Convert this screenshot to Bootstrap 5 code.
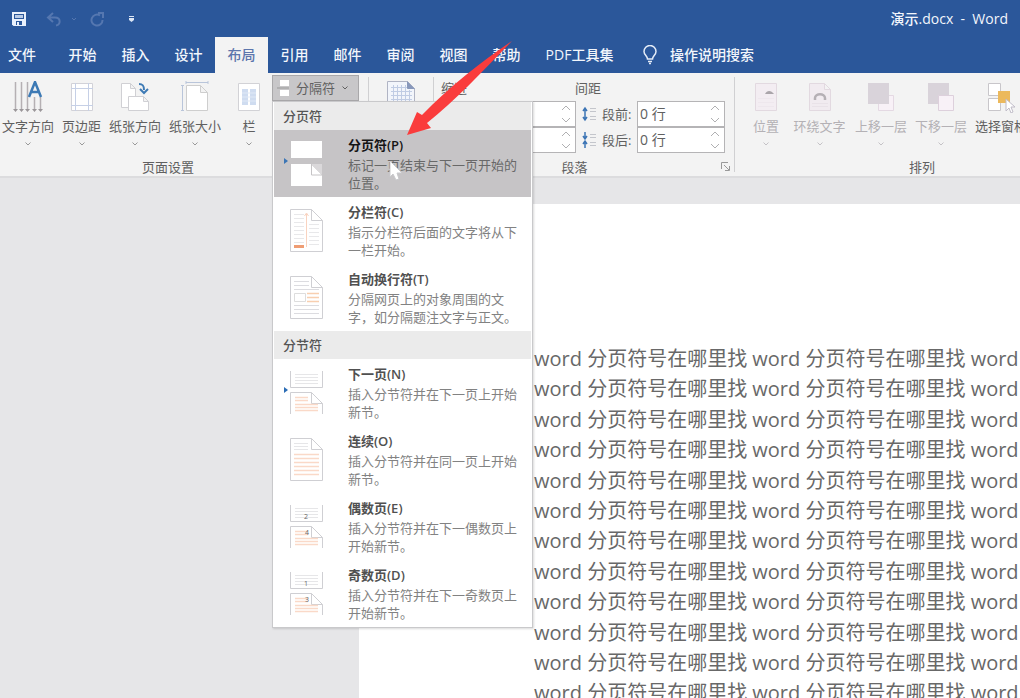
<!DOCTYPE html>
<html lang="zh-CN">
<head>
<meta charset="utf-8">
<meta name="viewport" content="width=device-width, initial-scale=1">
<title>演示.docx - Word</title>
<link href="https://cdn.jsdelivr.net/npm/bootstrap@5.3.0/dist/css/bootstrap.min.css" rel="stylesheet">
<style>
  body { font-family: "Open Sans", "Noto Sans CJK SC", sans-serif; font-size: 13px; line-height: 18px; color: #606060; background: #e6e6e8; }
  button, input { font: inherit; color: inherit; }
  svg { display: block; flex: none; }
  .topbar { background: #2b579a; color: #f2f6fc; }
  .title-row { height: 37px; padding: 0 12px; }
  .qat { border: 0; background: none; padding: 0; }
  .doc-title { font-size: 14px; font-weight: 500; white-space: pre; }
  .tab-row { height: 36px; flex-wrap: nowrap; white-space: nowrap; }
  .tab-row .nav-link { width: 53px; height: 35px; padding: 0; line-height: 35px; text-align: center; color: #f2f6fc; font-size: 14px; font-weight: 500; border-radius: 0; }
  .tab-row .nav-link.file-tab { width: 44px; margin-right: 12px; }
  .tab-row .nav-link.active { background: #f3f3f3; color: #5d76ad; height: 36px; }
  .tab-row .nav-link.wide { width: 93px; }
  .tab-row .nav-link.tell { width: auto; gap: 13px; margin-left: 17px; }
  .ribbon { background: #f3f3f3; border-bottom: 2px solid #dcdcde; height: 105px; white-space: nowrap; }
  .group { padding-top: 2px; position: relative; }
  .group + .group::before { content: ""; position: absolute; left: 0; top: 4px; bottom: 4px; width: 1px; background: #d0d0d2; }
  .g-body { height: 83px; }
  .g-label { text-align: center; }
  .setup { width: 368px; } .setup .g-label { padding-right: 32px; }
  .manu { width: 65px; } .para { width: 301px; } .para .g-label { padding-right: 18px; }
  .arrange { flex: 1 1 0; min-width: 0; overflow: hidden; }
  .arrange > div { width: 376px; }
  .tool { border: 0; background: none; padding: 6px 0 0; display: flex; flex-direction: column; align-items: center; width: 60px; }
  .tool .txt { margin-top: 4px; }
  .tool .chev { margin-top: 7px; color: #999; }
  .tool:disabled { color: #b4b1b5; }
  .tool:disabled .chev { color: #c4c2c6; }
  .tool.w-sm { width: 44px; } .tool.w-md { width: 51px; } .tool.w-lg { width: 56px; } .tool.w-xl { width: 64px; }
  .break-wrap { margin: 0 9px 0 auto; }
  .break-btn { width: 87px; height: 26px; border: 1px solid #a9a8aa; background: #c8c7c9; padding: 0 4px; gap: 7px; border-radius: 0; }
  .break-menu { top: 26px; left: 0; width: 261px; padding: 0 1px; border: 1px solid #c9c9cb; border-radius: 0; color: #606060; font-size: 13px; box-shadow: 1px 1px 2px rgba(0,0,0,.15); z-index: 10; }
  .break-menu .sect { height: 28px; line-height: 28px; padding: 0 9px; margin: 0; background: #ebebeb; font-size: 13px; font-weight: 500; color: #555; }
  .break-menu .dropdown-item { height: 67px; display: flex; gap: 15px; padding: 0 6px 0 9px; color: #828282; white-space: normal; }
  .break-menu .dropdown-item.active { background: #c6c4c6; color: #686868; }
  .break-menu .words { padding-top: 6px; }
  .break-menu strong { display: block; color: #505050; font-weight: 600; margin-bottom: 2px; }
  .break-menu .active strong { color: #151515; }
  .field { height: 26px; width: 88px; background: #fff; border: 1px solid #b5b4b6; }
  .field.indent-field { width: 66px; }
  .field input { border: 0; background: none; outline: 0; padding: 0 2px; width: 100%; min-width: 0; font-size: 14px; }
  .spacing { margin: 0 9px 0 5px; }
  .spacing svg:first-child { margin-right: 5px; }
  .spacing label { width: 35px; }
  .gap-title { margin-left: 108px; }
  .launch { border: 0; background: none; padding: 0; position: absolute; right: 4px; bottom: 5px; }
  .sheet { margin: 26px 0 0 359px; padding: 140px 0 0 175px; background: #fff; overflow: hidden; white-space: nowrap; }
  .sheet p { font-size: 20px; line-height: 1.52; color: #686868; margin: 0; }
  .pointer { position: absolute; left: 389px; top: 160px; z-index: 20; }
  .callout { position: absolute; left: 400px; top: 36px; z-index: 20; pointer-events: none; }
</style>
</head>
<body class="vh-100 d-flex flex-column overflow-hidden position-relative">
<svg width="0" height="0" class="position-absolute" aria-hidden="true">
  <defs>
    <symbol id="chev" viewBox="0 0 6 4"><path d="M.5.5 3 3 5.500.5" fill="none" stroke="currentColor"/></symbol>
    <symbol id="spin" viewBox="0 0 10 22"><path d="M1 7 5 3 9 7M1 15l4 4 4-4" fill="none" stroke="#b0b0b2"/></symbol>
    <symbol id="page" viewBox="0 0 50 67"><path d="M7.500 12.500h21l11 11v31h-32zM28.500 12.500v11h11" fill="#fff" stroke="#cfcfd3"/></symbol>
    <symbol id="split" viewBox="0 0 50 67"><path d="M7.500 12v16.500h32V12M7.500 55V33.500h21l11 11V55M28.500 33.500v11h11" fill="none" stroke="#cfcfd3"/><path d="M12 15.500h23M12 18.500h23M12 21.500h23M12 24.500h23" stroke="#e6e6e8"/><path d="M12 38.500h13M12 41.500h13M12 45.500h23M12 48.500h23M12 51.500h23" stroke="#fad9c8" stroke-width="1.500"/></symbol>
  </defs>
</svg>

<header class="topbar">
  <div class="title-row d-flex align-items-center">
    <button class="qat" aria-label="保存"><svg width="14" height="14" viewBox="0 0 14 14"><path d="M0 0h14v14H1.500L0 12.500z" fill="#e9f0fb"/><path d="M2 2h10v5H2zM4 9h6v4H4z" fill="#2b579a"/><path d="M3 3h8v3H3z" fill="#b9cbe6"/><path d="M5 10h2v3H5z" fill="#e9f0fb"/></svg></button>
    <button class="qat ms-3 ps-1" aria-label="撤消"><svg width="44" height="16" viewBox="0 0 44 16" fill="none" stroke="#5577b0" stroke-width="2"><path d="M7 2 2 6.500 7 11M3 6.500h6c6 0 6 7 1 8"/><path d="m26 7 2 2 2-2" stroke-width="1"/></svg></button>
    <button class="qat" aria-label="重复"><svg width="14" height="16" viewBox="0 0 14 16" fill="none" stroke="#5577b0" stroke-width="2"><path d="M12.500 9A5.500 5.500 0 1 1 10 4.500M8 2h5v5"/></svg></button>
    <button class="qat ms-4" aria-label="自定义快速访问工具栏"><svg width="7" height="8" viewBox="0 0 7 8" fill="#dce6f5"><path d="M1 1h5v1H1zM1 3h5v2L3.500 7 1 5z"/></svg></button>
    <span class="doc-title ms-auto">演示.docx  -  Word</span>
  </div>
  <nav class="nav tab-row">
    <a class="nav-link file-tab" href="#">文件</a><a class="nav-link" href="#">开始</a><a class="nav-link" href="#">插入</a><a class="nav-link" href="#">设计</a><a class="nav-link active" href="#">布局</a><a class="nav-link" href="#">引用</a><a class="nav-link" href="#">邮件</a><a class="nav-link" href="#">审阅</a><a class="nav-link" href="#">视图</a><a class="nav-link" href="#">帮助</a><a class="nav-link wide" href="#">PDF工具集</a>
    <a class="nav-link tell d-flex align-items-center" href="#"><svg width="14" height="20" viewBox="0 0 14 20" fill="none" stroke="#e4ecf8" stroke-width="1.500"><path d="M4.500 14C4.500 11 1 10 1 6.500a6 6 0 0 1 12 0C13 10 9.500 11 9.500 14zM5 16.500h4M6 18.500h2"/></svg>操作说明搜索</a>
  </nav>
</header>

<section class="ribbon d-flex" aria-label="布局">
  <div class="group setup">
    <div class="g-body d-flex">
      <button class="tool w-lg"><svg width="30" height="32" viewBox="0 0 30 32"><path d="M2.500 1v27M8.500 1v27M14.500 1v27M21.500 16v12M27.500 16v12" stroke="#b5b0b3" stroke-width="1.500"/><path d="m0 28 2.500 3L5 28zM6 28l2.500 3 2.500-3zM12 28l2.500 3 2.500-3zM19 28l2.500 3 2.500-3zM25 28l2.500 3 2.500-3z" fill="#9b979a"/><path d="m16 16 6-15 6 15M18 11h8" fill="none" stroke="#3d7ab5" stroke-width="2.500"/></svg><span class="txt">文字方向</span><svg class="chev" width="6" height="4"><use href="#chev"/></svg></button>
      <button class="tool w-md"><svg width="22" height="32" viewBox="0 0 22 32"><path d="M.5 2.500h21v27H.5z" fill="#fff" stroke="#d2d2d8"/><path d="M4.500 2v28M17.500 2v28M0 7.500h22M0 24.500h22" stroke="#c6d0e6"/></svg><span class="txt">页边距</span><svg class="chev" width="6" height="4"><use href="#chev"/></svg></button>
      <button class="tool w-lg"><svg width="30" height="32" viewBox="0 0 30 32"><path d="M1.500 2.500h9l5 5v19h-14zM10.500 2.500v5h5" fill="#fff" stroke="#d0d0d4"/><path d="M8.500 15.500h15l5 5v9h-20zM23.500 15.500v5h5" fill="#fff" stroke="#d0d0d4"/><path d="M19 3c4 0 5 2 5 6m-4-1 4 4 4-4" fill="none" stroke="#3d7ab5" stroke-width="2"/></svg><span class="txt">纸张方向</span><svg class="chev" width="6" height="4"><use href="#chev"/></svg></button>
      <button class="tool w-xl"><svg width="28" height="32" viewBox="0 0 28 32"><path d="M5.500 4.500h14l7 7v18h-21zM19.500 4.500v7h7" fill="#fff" stroke="#cecece"/><path d="M5 1.500h22M1.500 4v26M5 0v3M27 0v3M0 4.500h3M0 29.500h3" stroke="#b9c5da"/></svg><span class="txt">纸张大小</span><svg class="chev" width="6" height="4"><use href="#chev"/></svg></button>
      <button class="tool w-sm"><svg width="22" height="32" viewBox="0 0 22 32"><path d="M.5 2.500h21v27H.5z" fill="#fff" stroke="#d2d2d6"/><path d="M4 8h6v16H4zM12 8h6v16h-6z" fill="#cfdcf0"/><path d="M4 12h14M4 16h14M4 20h14" stroke="#e0e9f6"/></svg><span class="txt">栏</span><svg class="chev" width="6" height="4"><use href="#chev"/></svg></button>
      <div class="break-wrap position-relative">
        <button class="break-btn d-flex align-items-center" aria-expanded="true"><svg width="12" height="16" viewBox="0 0 12 16"><path d="M3 0h9v6H3zM3 10h9v6H3z" fill="#fff"/><path d="M0 8h12" stroke="#999"/></svg>分隔符<svg width="6" height="4"><use href="#chev"/></svg></button>
        <div class="dropdown-menu break-menu show">
          <h6 class="sect">分页符</h6>
          <button class="dropdown-item active"><svg width="50" height="67" viewBox="0 0 50 67"><path d="M8 11h31v17H8zM8 34h20l11 11v11H8z" fill="#fff"/><path d="M28 34h11v11z" fill="#dad8da"/><path d="M28.500 34v11H39" fill="none" stroke="#c6c4c6"/><path d="m1 28 4 3-4 3z" fill="#3b75b5"/></svg><span class="words"><strong>分页符(P)</strong>标记一页结束与下一页开始的位置。</span></button>
          <button class="dropdown-item"><svg width="50" height="67" viewBox="0 0 50 67"><use href="#page"/><path d="M11 17.500h10M11 21.500h10M11 25.500h10M11 29.500h10M11 33.500h10M11 37.500h10M11 41.500h10M11 45.500h10M26 27.500h10M26 31.500h10M26 35.500h10M26 39.500h10M26 43.500h10M26 47.500h10" stroke="#e8e8ea"/><path d="M23.500 50V17m-2 2 2-3 2 3" fill="none" stroke="#f9d3c0"/><path d="M11 48h10v3H11z" fill="#ef9d74"/></svg><span class="words"><strong>分栏符(C)</strong>指示分栏符后面的文字将从下一栏开始。</span></button>
          <button class="dropdown-item"><svg width="50" height="67" viewBox="0 0 50 67"><use href="#page"/><path d="M11 17.500h15M11 21.500h15M11 25.500h25M11 41.500h25M11 45.500h25M11 49.500h25" stroke="#dcdce0"/><path d="M11.500 29.500h11v8h-11z" fill="#fff" stroke="#ddd"/><path d="M24 29.500h12M24 33.500h12M24 37.500h12" stroke="#f8cfb0" stroke-width="1.500"/></svg><span class="words"><strong>自动换行符(T)</strong>分隔网页上的对象周围的文字，如分隔题注文字与正文。</span></button>
          <h6 class="sect">分节符</h6>
          <button class="dropdown-item"><svg width="50" height="67" viewBox="0 0 50 67"><use href="#split"/><path d="m1 28 4 3-4 3z" fill="#2b6cb5"/></svg><span class="words"><strong>下一页(N)</strong>插入分节符并在下一页上开始新节。</span></button>
          <button class="dropdown-item"><svg width="50" height="67" viewBox="0 0 50 67"><use href="#page"/><path d="M11 17.500h14M11 20.500h14M11 23.500h14" stroke="#e6e6e8"/><path d="M11 28.500h25M11 32.500h25M11 36.500h25M11 40.500h25M11 44.500h25M11 48.500h25" stroke="#fad9c8" stroke-width="1.500"/></svg><span class="words"><strong>连续(O)</strong>插入分节符并在同一页上开始新节。</span></button>
          <button class="dropdown-item"><svg width="50" height="67" viewBox="0 0 50 67"><use href="#split"/><text x="21" y="26" font-size="7" fill="#666">2</text><text x="22" y="42" font-size="7" fill="#666">4</text></svg><span class="words"><strong>偶数页(E)</strong>插入分节符并在下一偶数页上开始新节。</span></button>
          <button class="dropdown-item"><svg width="50" height="67" viewBox="0 0 50 67"><use href="#split"/><text x="21" y="26" font-size="7" fill="#666">1</text><text x="22" y="42" font-size="7" fill="#666">3</text></svg><span class="words"><strong>奇数页(D)</strong>插入分节符并在下一奇数页上开始新节。</span></button>
        </div>
      </div>
    </div>
    <div class="g-label">页面设置</div>
  </div>

  <div class="group manu">
    <button class="tool w-100" aria-label="稿纸设置"><svg width="28" height="32" viewBox="0 0 28 32"><path d="M.5.500h20l7 7v24H.5z" fill="#f2f5fb" stroke="#b0b4c4"/><path d="M20.500.500v7h7" fill="#8898bb" stroke="#8898bb"/><path d="M4 6.500h16M4 10.500h21M4 14.500h21M4 18.500h21M4 22.500h21M6.500 4v22M10.500 4v22M14.500 4v22M18.500 4v22M22.500 9v17" stroke="#c0cce4"/></svg></button>
  </div>

  <div class="group para">
    <div class="g-body ps-2">
      <div class="d-flex pt-1"><span>缩进</span><span class="gap-title">间距</span></div>
      <div class="d-flex mt-1">
        <div class="flex-grow-1 d-flex flex-column align-items-end">
          <div class="field indent-field d-flex align-items-center pe-1"><input aria-label="左缩进"><svg width="10" height="22"><use href="#spin"/></svg></div>
          <div class="field indent-field d-flex align-items-center pe-1"><input aria-label="右缩进"><svg width="10" height="22"><use href="#spin"/></svg></div>
        </div>
        <div class="spacing">
          <div class="d-flex align-items-center">
            <svg width="16" height="16" viewBox="0 0 16 16"><path d="M4 3v10M2 5l2-3 2 3M2 11l2 3 2-3" fill="none" stroke="#3d75b5" stroke-width="1.500"/><path d="M9 2.500h6M9 5.500h6M9 10.500h6M9 13.500h6" stroke="#c4c6cc"/></svg>
            <label for="before">段前:</label>
            <div class="field d-flex align-items-center pe-1"><input id="before" value="0 行"><svg width="10" height="22"><use href="#spin"/></svg></div>
          </div>
          <div class="d-flex align-items-center">
            <svg width="16" height="16" viewBox="0 0 16 16"><path d="M4 0v6M2 4l2 3 2-3M4 16v-6M2 12l2-3 2 3" fill="none" stroke="#3d75b5" stroke-width="1.500"/><path d="M9 2.500h6M9 5.500h6M9 10.500h6M9 13.500h6" stroke="#c4c6cc"/></svg>
            <label for="after">段后:</label>
            <div class="field d-flex align-items-center pe-1"><input id="after" value="0 行"><svg width="10" height="22"><use href="#spin"/></svg></div>
          </div>
        </div>
      </div>
    </div>
    <div class="g-label">段落</div>
    <button class="launch" aria-label="段落设置"><svg width="9" height="9" viewBox="0 0 9 9"><path d="M.5 7V.5H7M3 3l5 5M8.500 4v4.500H4" fill="none" stroke="#999"/></svg></button>
  </div>

  <div class="group arrange">
    <div class="g-body d-flex ps-1">
      <button class="tool w-lg" disabled><svg width="22" height="32" viewBox="0 0 22 32"><path d="M.5 2.500h21v27H.5z" fill="#f3edf2" stroke="#e2d9e0"/><path d="M10 13c2-4 6-4 9 0z" fill="#aaa5aa"/><path d="M3 17.500h16M3 21.500h16M3 25.500h16" stroke="#eee7ed"/></svg><span class="txt">位置</span><svg class="chev" width="6" height="4"><use href="#chev"/></svg></button>
      <button class="tool w-md" disabled><svg width="22" height="32" viewBox="0 0 22 32"><path d="M.5 2.500h15l6 6v21H.5zM15.500 2.500v6h6" fill="#f1ebf0" stroke="#e2d9e0"/><path d="M6 19v-2c0-5 10-5 10 0v2" fill="none" stroke="#b5b0b5" stroke-width="2.500"/><path d="M3 22.500h16M3 25.500h16" stroke="#e9e2e8"/></svg><span class="txt">环绕文字</span><svg class="chev" width="6" height="4"><use href="#chev"/></svg></button>
      <button class="tool w-xl ms-1" disabled><svg width="28" height="32" viewBox="0 0 28 32"><path d="M11.500 14.500h15v15h-15z" fill="#f8f1f7" stroke="#e4d9e3"/><path d="M1 2h21v21H1z" fill="#d9d3da"/></svg><span class="txt">上移一层</span><svg class="chev" width="6" height="4"><use href="#chev"/></svg></button>
      <button class="tool w-lg" disabled><svg width="28" height="32" viewBox="0 0 28 32"><path d="M1 2h21v21H1z" fill="#d9d3da"/><path d="M11.500 14.500h15v15h-15z" fill="#f8f1f7" stroke="#ddd0dc"/></svg><span class="txt">下移一层</span><svg class="chev" width="6" height="4"><use href="#chev"/></svg></button>
      <button class="tool w-xl"><svg width="28" height="32" viewBox="0 0 28 32"><path d="M1.500 2.500h12v12h-12zM1.500 17.500h12v12h-12z" fill="#fff" stroke="#c8c6ca"/><path d="M11 10h12v12H11z" fill="#ecb95c"/><path d="M19 18v12l3-3 2 5 2-1-2-5h4z" fill="#fff" stroke="#c0bcc8"/></svg><span class="txt">选择窗格</span></button>
    </div>
    <div class="g-label">排列</div>
  </div>
</section>

<main class="flex-grow-1 d-flex flex-column overflow-hidden">
  <article class="sheet flex-grow-1">
    <p>word 分页符号在哪里找 word 分页符号在哪里找 word</p>
    <p>word 分页符号在哪里找 word 分页符号在哪里找 word</p>
    <p>word 分页符号在哪里找 word 分页符号在哪里找 word</p>
    <p>word 分页符号在哪里找 word 分页符号在哪里找 word</p>
    <p>word 分页符号在哪里找 word 分页符号在哪里找 word</p>
    <p>word 分页符号在哪里找 word 分页符号在哪里找 word</p>
    <p>word 分页符号在哪里找 word 分页符号在哪里找 word</p>
    <p>word 分页符号在哪里找 word 分页符号在哪里找 word</p>
    <p>word 分页符号在哪里找 word 分页符号在哪里找 word</p>
    <p>word 分页符号在哪里找 word 分页符号在哪里找 word</p>
    <p>word 分页符号在哪里找 word 分页符号在哪里找 word</p>
    <p>word 分页符号在哪里找 word 分页符号在哪里找 word</p>
  </article>
</main>

<svg class="pointer" width="14" height="22" viewBox="0 0 14 22"><path d="M1 1v16l3-3 3 6 3-1-2-6h5z" fill="#fff" stroke="#c9c9cc"/></svg>
<svg class="callout" width="120" height="104" viewBox="0 0 120 104"><path d="M112 5C85 23 50 50 22 79l-5-3-10 23 24-7-4-5C56 64 84 34 112 5z" fill="#fa3c3c"/></svg>
<script src="https://cdn.jsdelivr.net/npm/bootstrap@5.3.0/dist/js/bootstrap.bundle.min.js"></script>
</body>
</html>
